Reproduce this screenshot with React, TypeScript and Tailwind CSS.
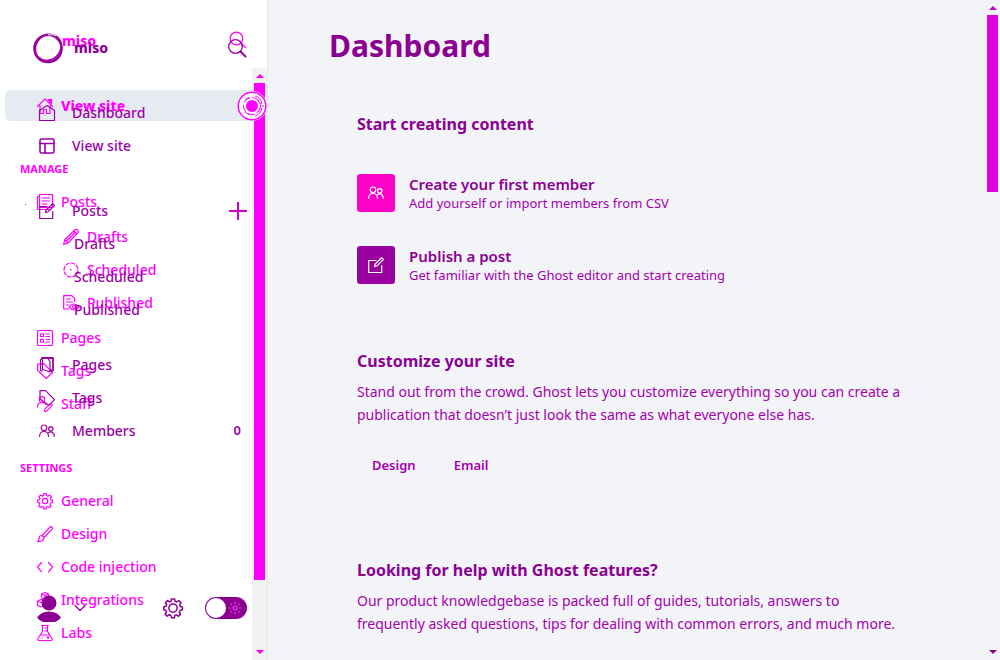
import type { ReactNode } from "react";

type IconProps = { children: ReactNode; className?: string; box?: string };

function Icon({ children, className = "size-4", box = "0 0 16 16" }: IconProps) {
  return (
    <svg
      viewBox={box}
      className={`${className} shrink-0 overflow-visible`}
      fill="none"
      stroke="currentColor"
      strokeWidth="1.2"
      strokeLinecap="round"
      strokeLinejoin="round"
      aria-hidden="true"
    >
      {children}
    </svg>
  );
}

const gearPath =
  "M6.7.7h2.6l.4 2 1.2.5 1.7-1.2 1.8 1.9-1.1 1.6.5 1.3 1.7.4v2.3l-1.9.5-.6 1.2 1.1 1.7-1.7 1.7-1.7-1.1-1.2.5-.4 1.8H6.8l-.5-1.9-1.2-.5-1.7 1.1-1.7-1.7 1.1-1.8-.5-1.1-1.7-.5V7l1.9-.4.5-1.2-1.1-1.6 1.7-1.8 1.7 1.1 1.2-.5z";

const icons = {
  homeRoof: (
    <Icon>
      <path d="M.5 8.500 8 .8l7.500 7.700M3 7v8.500h3.500v-4h3v4H13V7" />
      <path d="M11 1.500h3.500v4z" fill="currentColor" />
    </Icon>
  ),
  house: (
    <Icon>
      <path d="M.5 5.500 8 .5l7.500 5v10H.5z" />
    </Icon>
  ),
  layout: (
    <Icon>
      <rect x="1" y="1" width="14" height="14" rx="1.500" strokeWidth="1.600" />
      <path d="M1 5.500h14M6 5.500V15" strokeWidth="1.600" />
    </Icon>
  ),
  stack: (
    <Icon>
      <path d="M2.500.5h13v13h-13zM2.500 2.500h-2v13h12M5 4h8M5 7h8M5 10h5" />
    </Icon>
  ),
  compose: (
    <Icon>
      <path d="M8 3.500H.7v12h13V8.500M6.500 9.500l.6-2.500L13.600.8l1.800 1.700L9 8.900z" />
    </Icon>
  ),
  pencil: (
    <Icon>
      <path d="m.6 15.400 1.200-4.700L12 .8q1.700-.9 3 .6.900 1.400-.4 2.600L5 14zM1.800 10.700 5 14M4 11.500l8.500-8.300M10.800 2l3 3" />
    </Icon>
  ),
  clock: (
    <Icon>
      <circle cx="8" cy="8" r="7" strokeDasharray="3.500 2" />
      <path d="M7.500 7.500 8 8" />
    </Icon>
  ),
  published: (
    <Icon>
      <path d="M5.500 14H.7V.7h8l3 3v3M3.500 4h4M3.500 7h6M3.500 10h2M6 12q5-6 10 0-5 6-10 0z" />
      <circle cx="11" cy="12" r="1.500" />
    </Icon>
  ),
  list: (
    <Icon>
      <rect x=".5" y=".5" width="15" height="15" rx="1" />
      <path d="M3.500 4h3v2.500h-3zM3.500 9.500h3V12h-3zM9 4h3.500M9 6.500h3.500M9 9.500h3.500M9 12h3.500" />
    </Icon>
  ),
  pages: (
    <Icon>
      <path d="M3 1h11v12.500h-2.500" strokeWidth="1.800" />
      <path d="M1.500 2.500v10.500l1.500 1M3 1.200 2 2.500M3.500 2.500v10l3.500 1 4 1.500V4.500L9.500 2.500" />
    </Icon>
  ),
  tag: (
    <Icon>
      <path d="M.7 1v6.500l8.500 8 6.300-6-8.800-8.800zM3.500 4v.5" />
    </Icon>
  ),
  tagRight: (
    <Icon>
      <path d="M1 .7h5.500l9 9-5.500 5.700L1 9z" />
    </Icon>
  ),
  staff: (
    <Icon>
      <circle cx="5" cy="3.500" r="2.800" />
      <path d="M.5 11q0-4.500 4.500-4.500 2.800 0 4 2M7.500 15.400l.5-2.500 5.500-5.500 2 2-5.500 5.500z" />
    </Icon>
  ),
  members: (
    <Icon>
      <circle cx="5" cy="4.800" r="2.800" />
      <circle cx="11.800" cy="5.800" r="2.200" />
      <path d="M.6 13.500q0-5 4.400-5t4.500 5M9 10q3-2.300 5 0 1.300 1 1.300 3.500" />
    </Icon>
  ),
  gear: (
    <Icon>
      <path d={gearPath} />
      <circle cx="8" cy="8" r="2.700" />
    </Icon>
  ),
  brush: (
    <Icon>
      <path d="m5 9.500 8-8.300q1-.9 2 0t.2 1.900L7 11.500zM5 9.500q-3 0-3 3 0 2-1.500 3 6 .5 6.500-4" />
    </Icon>
  ),
  code: (
    <Icon>
      <path d="M4.500 3.500.5 8l4 4.800M11.500 3.500l4 4.500-4 4.800" />
    </Icon>
  ),
  modules: (
    <Icon>
      <path d="m4.500 2 3.500-1.500L11.500 2v4L8 7.500 4.500 6zM4.500 2 8 3.500 11.500 2M8 3.500v4M.5 9 4 7.500 7.500 9v4.500L4 15 .5 13.500zM.5 9 4 10.500 7.500 9M8.500 9 12 7.500 15.500 9v4.500L12 15l-3.500-1.500z" />
    </Icon>
  ),
  labs: (
    <Icon>
      <path d="M4.500.5h7M5.500.5v6L.7 14q0 1.500 1.200 1.500h12.200q1.200 0 1.200-1.500l-4.800-7.500v-6M3.500 10h9M8 3h2.500M8 6h2.500M5 13h.5M10 12.500h2M11 11.500v2" />
    </Icon>
  ),
};

type Item = { label: string; icon?: ReactNode; count?: string };

function BackRow({ label, icon }: Item) {
  return (
    <li>
      <a href="#" className="flex h-[33px] items-center gap-2 pl-[37px]">
        {icon}
        {label}
      </a>
    </li>
  );
}

function BackSubRow({ label, icon }: Item) {
  return (
    <li>
      <a href="#" className="flex h-[33px] items-center gap-2 pl-[63px]">
        {icon}
        {label}
      </a>
    </li>
  );
}

function FrontRow({ label, icon, count }: Item) {
  return (
    <li>
      <a href="#" className="flex h-[33px] items-center gap-[17px] pr-[26px] pl-[39px]">
        {icon}
        <span className="flex-1">{label}</span>
        {count && <span className="text-[13px] font-semibold">{count}</span>}
      </a>
    </li>
  );
}

function Triangle({ down = false }: { down?: boolean }) {
  return (
    <svg viewBox="0 0 8 4" className="h-1 w-2" fill="currentColor" aria-hidden="true">
      <path d={down ? "M0 0h8L4 4z" : "M0 4h8L4 0z"} />
    </svg>
  );
}

function Ring() {
  return (
    <svg viewBox="0 0 30 30" className="size-[30px] overflow-visible" fill="none" stroke="#8b0092" aria-hidden="true">
      <circle cx="15" cy="15.500" r="13.600" strokeWidth="2.400" />
      <ellipse cx="15.500" cy="14.800" rx="13.800" ry="12.200" transform="rotate(-48 15 15)" stroke="#a800b0" strokeWidth="1.800" />
      <path d="M15 1.800q4-1.200 8 1" stroke="#d0b4d4" strokeWidth="1.500" />
    </svg>
  );
}

function Magnifier() {
  return (
    <Icon className="size-[18px]" box="0 0 18 18">
      <circle cx="7.500" cy="7.500" r="6.300" />
      <path d="m12.500 12.500 4 4" />
    </Icon>
  );
}

function BackLayer() {
  return (
    <div className="flex h-full flex-col text-[#ff00ff]">
      <div className="flex h-[68px] shrink-0 items-start justify-between pt-[31px] pr-5 pl-[62px]">
        <span className="text-[14px] leading-5 font-extrabold">miso</span>
        <Magnifier />
      </div>
      <div className="flex min-h-0 flex-1">
        <nav aria-label="Site" className="flex-1 overflow-hidden pt-[22px] text-[14px] font-medium">
          <a href="#" className="ml-[5px] flex h-[31px] items-center gap-2 rounded-l-[5px] bg-[#e6ebf2] pl-8 font-extrabold">
            {icons.homeRoof}
            View site
          </a>
          <h2 className="mt-[39px] pl-5 text-[11px] leading-[18px] font-bold">MANAGE</h2>
          <ul className="mt-[7px]">
            <BackRow label="Posts" icon={icons.stack} />
          </ul>
          <ul className="mt-0.5">
            <BackSubRow label="Drafts" icon={icons.pencil} />
            <BackSubRow label="Scheduled" icon={icons.clock} />
            <BackSubRow label="Published" icon={icons.published} />
          </ul>
          <ul className="mt-0.5">
            <BackRow label="Pages" icon={icons.list} />
            <BackRow label="Tags" icon={icons.tag} />
            <BackRow label="Staff" icon={icons.staff} />
          </ul>
          <h2 className="mt-[39px] pl-5 text-[11px] leading-[18px] font-bold">SETTINGS</h2>
          <ul className="mt-[7px]">
            <BackRow label="General" icon={icons.gear} />
            <BackRow label="Design" icon={icons.brush} />
            <BackRow label="Code injection" icon={icons.code} />
            <BackRow label="Integrations" icon={icons.modules} />
            <BackRow label="Labs" icon={icons.labs} />
          </ul>
        </nav>
        <div className="flex w-[15px] flex-col items-center bg-[#f1f1f1] pt-1.5 pb-1.5">
          <Triangle />
          <div className="mt-[5px] w-[11px] flex-1 bg-[#ff00ff]" />
          <div className="h-[70px]" />
          <Triangle down />
        </div>
      </div>
    </div>
  );
}

function FrontLayer() {
  return (
    <div className="absolute inset-0 flex flex-col text-[#9c00a6]">
      <div className="flex h-24 shrink-0 items-start pt-[33px] pr-[21px] pl-[33px]">
        <Ring />
        <span className="mt-[5px] ml-[11px] flex-1 text-[14px] leading-5 font-extrabold text-[#8b0092]">miso</span>
        <button type="button" aria-label="Search" className="mt-1.5">
          <Icon className="size-[18px]" box="0 0 18 18">
            <circle cx="7.500" cy="7.500" r="6.800" strokeWidth="1.300" />
            <path d="m12.500 12.500 5 5" strokeWidth="2" />
          </Icon>
        </button>
      </div>
      <nav aria-label="Main" className="text-[14px] font-medium">
        <ul>
          <FrontRow label="Dashboard" icon={icons.house} />
          <FrontRow label="View site" icon={icons.layout} />
        </ul>
        <div className="mt-8 flex h-[33px] items-center pr-5">
          <a href="#" className="flex flex-1 items-center gap-[17px] pl-[39px]">
            {icons.compose}
            Posts
          </a>
          <button type="button" aria-label="New post" className="text-[#cc00cc]">
            <Icon className="size-[18px]" box="0 0 18 18">
              <path d="M9 0v18M0 9h18" strokeWidth="2" strokeLinecap="butt" />
            </Icon>
          </button>
        </div>
        <ul className="pl-[74px]">
          {["Drafts", "Scheduled", "Published"].map((label) => (
            <li key={label}>
              <a href="#" className="flex h-[33px] items-center">
                {label}
              </a>
            </li>
          ))}
        </ul>
        <ul className="mt-[22px]">
          <FrontRow label="Pages" icon={icons.pages} />
          <FrontRow label="Tags" icon={icons.tagRight} />
          <FrontRow label="Members" icon={icons.members} count="0" />
        </ul>
      </nav>
      <div className="mt-auto mb-9 flex h-8 items-center pr-5 pl-[37px] text-[#8b0092]">
        <button type="button" aria-label="Account" className="flex items-center gap-3">
          <svg viewBox="0 0 24 28" className="h-7 w-6" fill="currentColor" aria-hidden="true">
            <circle cx="12" cy="9" r="7.500" />
            <path d="M0 23.500q4-6 12-6t12 6q-4 5.500-12 5.500T0 23.500z" />
          </svg>
          <Icon className="size-3" box="0 0 12 12">
            <path d="m2 3.500 5 5 5-5" />
          </Icon>
        </button>
        <button type="button" aria-label="Settings" className="mr-[22px] ml-auto">
          <Icon className="size-5">
            <path d={gearPath} />
            <circle cx="8" cy="8" r="3.300" />
          </Icon>
        </button>
        <label className="relative block h-[22px] w-[42px]">
          <input type="checkbox" aria-label="Night mode" className="block size-full appearance-none rounded-full bg-[#8b0092]" />
          <span className="absolute top-px left-px size-5 rounded-full bg-white" />
          <span className="absolute top-[5px] right-1.5 text-[#f040f0]">
            <Icon className="size-3" box="0 0 12 12">
              <circle cx="6" cy="6" r="2" />
              <path d="M6 0v1.500M6 10.500V12M0 6h1.500M10.500 6H12M1.800 1.800l.9.9M9.300 9.300l.9.9M1.800 10.200l.9-.9M9.300 2.700l.9-.9" />
            </Icon>
          </span>
        </label>
      </div>
    </div>
  );
}

function Sidebar() {
  return (
    <aside className="relative h-full w-[268px] shrink-0 border-r border-[#e4e8ee] bg-white">
      <BackLayer />
      <FrontLayer />
      <svg viewBox="0 0 30 30" className="absolute top-[91px] right-0 size-[30px]" fill="none" stroke="#ff00ff" aria-hidden="true">
        <circle cx="15" cy="15" r="15" fill="#fff" stroke="none" />
        <circle cx="15" cy="15" r="13.800" strokeWidth="1.500" />
        <path d="M18 5q6 2 7 8M20 8.500q2.500 1.500 3 4M25 17q-1 6-7 8M23 17.500q-.5 2.500-3 4M8 9q2-2 4-2.500M8 21q2 2 4 2.500M26 14v2" />
        <circle cx="15" cy="15" r="8.500" strokeDasharray="8 2" />
        <circle cx="15" cy="15" r="6" fill="#ff00ff" stroke="none" />
      </svg>
      <span className="absolute top-[204px] left-[25px] size-px bg-[#ff00ff]" />
    </aside>
  );
}

type TaskProps = { title: string; text: string; tone: string; icon: ReactNode };

function Task({ title, text, tone, icon }: TaskProps) {
  return (
    <a href="#" className="flex items-center gap-3.5">
      <span className={`flex size-[38px] shrink-0 items-center justify-center rounded-[3px] text-white ${tone}`}>{icon}</span>
      <span>
        <span className="block text-[15px] leading-5 font-semibold text-[#8b0092]">{title}</span>
        <span className="block text-[13px] leading-[18px]">{text}</span>
      </span>
    </a>
  );
}

export default function App() {
  return (
    <div className="flex h-screen overflow-hidden bg-[#f2f4f8] font-['Noto_Sans',sans-serif]">
      <Sidebar />
      <main className="min-w-0 flex-1 overflow-hidden pl-[61px] text-[#a500ae]">
        <h1 className="mt-6 text-[30px] leading-[44px] font-bold text-[#8b0092]">Dashboard</h1>
        <div className="max-w-[576px] pl-7">
          <section className="mt-11">
            <h2 className="text-[16px] leading-6 font-bold text-[#8b0092]">Start creating content</h2>
            <div className="mt-[38px] flex flex-col gap-[34px]">
              <Task title="Create your first member" text="Add yourself or import members from CSV" tone="bg-[#ff00c8]" icon={icons.members} />
              <Task title="Publish a post" text="Get familiar with the Ghost editor and start creating" tone="bg-[#9900a0]" icon={icons.compose} />
            </div>
          </section>
          <section className="mt-[65px]">
            <h2 className="text-[16px] leading-6 font-bold text-[#8b0092]">Customize your site</h2>
            <p className="mt-[7px] text-[14px] leading-[23px]">
              Stand out from the crowd. Ghost lets you customize everything so you can create a publication that doesn’t just look the same as what everyone else has.
            </p>
            <div className="mt-[23px] flex gap-2 text-[13px] leading-5 font-semibold">
              <button type="button" className="px-[15px] py-1.5">Design</button>
              <button type="button" className="px-[15px] py-1.5">Email</button>
            </div>
          </section>
          <section className="mt-[77px]">
            <h2 className="text-[16px] leading-6 font-bold text-[#8b0092]">Looking for help with Ghost features?</h2>
            <p className="mt-[7px] text-[14px] leading-[23px]">
              Our product knowledgebase is packed full of guides, tutorials, answers to frequently asked questions, tips for dealing with common errors, and much more.
            </p>
          </section>
        </div>
      </main>
      <div className="flex w-[15px] shrink-0 flex-col items-center py-1.5 text-[#c000c0]">
        <Triangle />
        <div className="mt-[5px] h-[177px] w-[11px] bg-[#e000e0]" />
        <div className="mt-auto text-[#8b0092]">
          <Triangle down />
        </div>
      </div>
    </div>
  );
}
